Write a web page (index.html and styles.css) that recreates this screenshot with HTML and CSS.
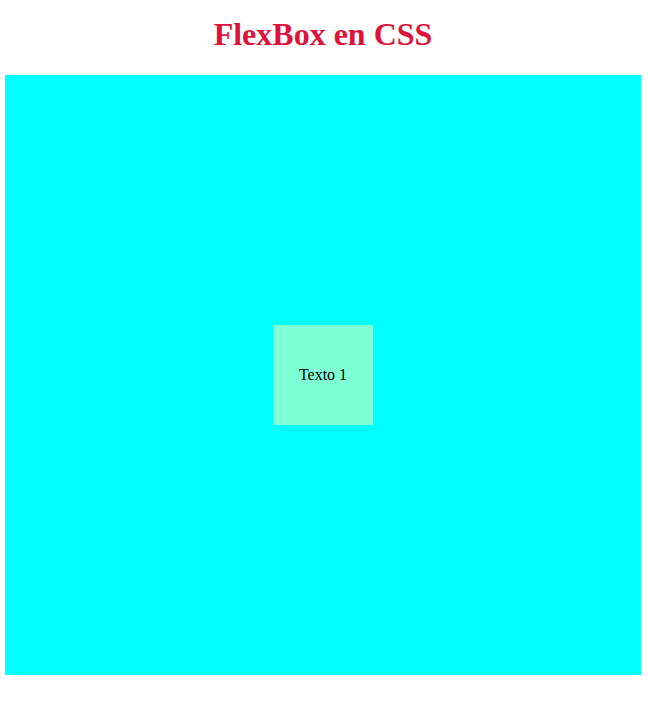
FILE: index.html
```html
<!DOCTYPE html>
<html lang="es">
<head>
<meta charset="utf-8">
<title>FlexBox en CSS</title>
<link rel="stylesheet" href="styles.css">
</head>
<body>
<h1 class="title">FlexBox en CSS</h1>
<div class="container">
  <div class="item">Texto 1</div>
</div>
</body>
</html>
```
FILE: styles.css
```css
html, body {
  background: #ffffff;
}
body {
  margin: 0;
  padding: 0 7px 0 5px;
  font-family: "Liberation Serif", "Times New Roman", serif;
  font-size: 16px;
  color: #000;
}
.title {
  margin: 16px 0 22px;
  font-size: 32px;
  line-height: 37px;
  font-weight: bold;
  text-align: center;
  color: crimson;
}
.container {
  width: 636px;
  height: 600px;
  background: cyan;
  display: flex;
  justify-content: center;
  align-items: center;
}
.item {
  width: 100px;
  height: 100px;
  background: aquamarine;
  display: flex;
  justify-content: center;
  align-items: center;
}
```
